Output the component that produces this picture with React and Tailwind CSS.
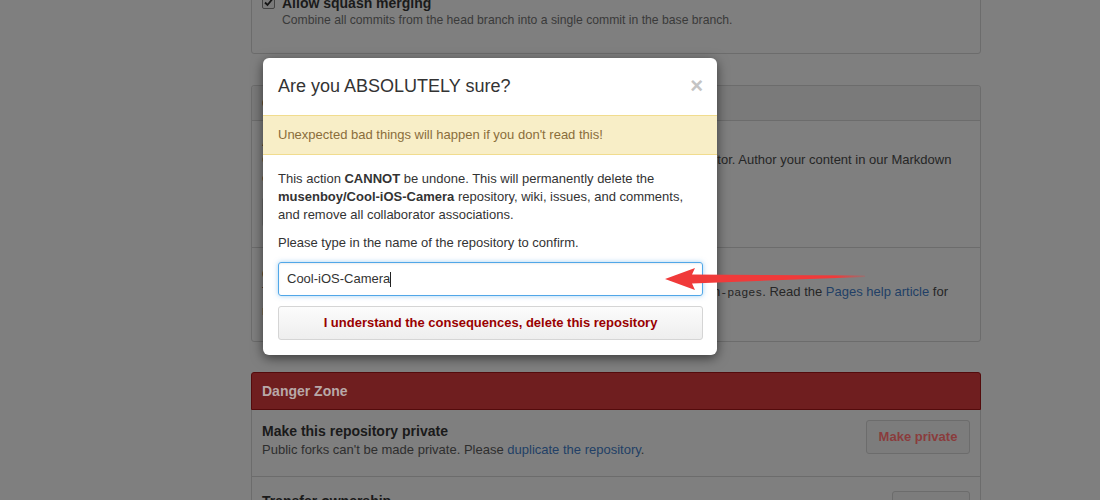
import React from "react";

function Checkbox() {
  return (
    <span className="w-[13px] h-[13px] mt-[2px] mr-[7px] flex items-center justify-center rounded-[2px] border border-[#444] bg-[#7a7a7a]">
      <svg width="9" height="9" viewBox="0 0 9 9">
        <path d="M1 4.5 L3.5 7 L8 1.5" fill="none" stroke="#151515" strokeWidth="1.8" />
      </svg>
    </span>
  );
}

function Arrow() {
  return (
    <svg className="absolute left-[660px] top-[262px]" width="210" height="32" viewBox="0 0 210 32">
      <defs>
        <linearGradient id="tail" x1="0" y1="0" x2="1" y2="0">
          <stop offset="0" stopColor="#f03a3a" />
          <stop offset="0.85" stopColor="#f03a3a" />
          <stop offset="1" stopColor="#f03a3a" stopOpacity="0.2" />
        </linearGradient>
      </defs>
      <polygon
        points="5,17 35,6 32,12.5 205,13.5 205,15 32,21.5 35,28"
        fill="url(#tail)"
      />
    </svg>
  );
}

export default function App() {
  return (
    <div className="relative w-full h-[500px] overflow-hidden bg-[#7f7f7f] font-['Liberation_Sans',Arial,sans-serif] text-[#1a1a1a]">
      {/* PAGE (dimmed behind the modal) */}
      <div className="ml-[251px] w-[730px]">
        {/* merge options box */}
        <div className="-mt-[22px] border border-[#6c6c6c] rounded-[3px] px-[10px] pt-[15px] pb-[24px]">
          <div className="flex items-start">
            <Checkbox />
            <div className="text-[14px] leading-[18px] font-bold">Allow squash merging</div>
          </div>
          <div className="pl-[20px] text-[12.2px] leading-[17px] text-[#3a3a3a]">
            Combine all commits from the head branch into a single commit in the base branch.
          </div>
        </div>

        {/* GitHub Pages box */}
        <div className="mt-[31px] border border-[#6c6c6c] rounded-[3px]">
          <div className="h-[35px] px-[10px] flex items-center bg-[#7a7a7a] border-b border-[#6c6c6c] text-[14px] font-bold rounded-t-[3px]">
            GitHub Pages
          </div>
          <div className="h-[126px] px-[10px] pt-[10px]">
            <div className="text-[14px] leading-[20px] font-bold">Automatic page generator</div>
            <div className="text-[13px] leading-[18px] text-[#262626]">
              Create a lovely project page with our automatic page generator and content editor. Author your content in our Markdown
              <br />
              editor, then pick a theme.
            </div>
            <div className="mt-[10px] inline-block h-[30px] px-[10px] border border-[#6c6c6c] rounded-[3px] text-[13px] leading-[28px] font-bold">
              Launch automatic page generator
            </div>
          </div>
          <div className="h-[94px] px-[10px] pt-[17px] border-t border-[#6c6c6c]">
            <div className="text-[14px] leading-[18px] font-bold">Custom domain</div>
            <div className="text-[13px] leading-[18px] text-[#262626]">
              The GitHub Pages site is currently built and published automatically from the gh
              <code className="font-['Liberation_Mono',monospace] text-[11.7px]">-pages</code>. Read the{" "}
              <span className="text-[#223f66]">Pages help article</span> for
              <br />
              more information.
            </div>
          </div>
        </div>

        {/* Danger zone */}
        <div className="mt-[30px]">
          <div className="h-[38px] px-[10px] flex items-center bg-[#6f1e1f] border border-[#540b0c] rounded-t-[3px] text-[14px] font-bold text-[#b8a8a8]">
            Danger Zone
          </div>
          <div className="h-[66px] px-[10px] pt-[11px] flex items-start justify-between border-x border-[#6c6c6c]">
            <div>
              <div className="text-[14px] leading-[20px] font-bold">Make this repository private</div>
              <div className="text-[13px] leading-[18px] text-[#2e2e2e]">
                Public forks can't be made private. Please{" "}
                <span className="text-[#223f66]">duplicate the repository</span>.
              </div>
            </div>
            <div className="-mt-px w-[104px] h-[34px] flex items-center justify-center rounded-[3px] border border-[#6c6c6c] bg-[#7c7c7c] text-[13px] font-bold text-[#8a3c3c]">
              Make private
            </div>
          </div>
          <div className="h-[60px] px-[10px] pt-[14px] flex items-start justify-between border-t border-x border-[#6c6c6c]">
            <div className="text-[14px] leading-[20px] font-bold">Transfer ownership</div>
            <div className="w-[78px] h-[33px] rounded-[3px] border border-[#6c6c6c] bg-[#7c7c7c]" />
          </div>
        </div>
      </div>

      {/* MODAL */}
      <div className="absolute left-[263px] top-[58px] w-[454px] bg-white rounded-[6px] shadow-[0_3px_12px_rgba(0,0,0,0.55)] text-[#333]">
        <div className="h-[57px] px-[15px] flex items-center justify-between">
          <h3 className="text-[18px]">Are you ABSOLUTELY sure?</h3>
          <span className="text-[22px] leading-none font-bold text-[#c4c4c4] mr-[-1px] -mt-[2px]">×</span>
        </div>
        <div className="h-[40px] px-[15px] flex items-center bg-[#f8eec7] border-y border-[#f1dc8e] text-[13px] text-[#8a6d3b]">
          Unexpected bad things will happen if you don't read this!
        </div>
        <div className="pl-[15px] pr-[14px] pt-[15px] pb-[15px] text-[13px] leading-[18px]">
          <p>
            This action <strong>CANNOT</strong> be undone. This will permanently delete the{" "}
            <strong>musenboy/Cool-iOS-Camera</strong> repository, wiki, issues, and comments, and remove all collaborator associations.
          </p>
          <p className="mt-[10px]">Please type in the name of the repository to confirm.</p>
          <div className="mt-[10px] h-[34px] px-[8px] flex items-center rounded-[3px] border border-[#51a7e8] shadow-[inset_0_1px_2px_rgba(0,0,0,0.075),0_0_5px_rgba(81,167,232,0.5)]">
            <span>Cool-iOS-Camera</span>
            <span className="w-px h-[15px] bg-[#222]" />
          </div>
          <div className="mt-[10px] h-[34px] flex items-center justify-center rounded-[3px] border border-[#d5d5d5] bg-gradient-to-b from-[#fcfcfc] to-[#eeeeee] font-bold text-[#900]">
            I understand the consequences, delete this repository
          </div>
        </div>
      </div>

      <Arrow />
    </div>
  );
}
